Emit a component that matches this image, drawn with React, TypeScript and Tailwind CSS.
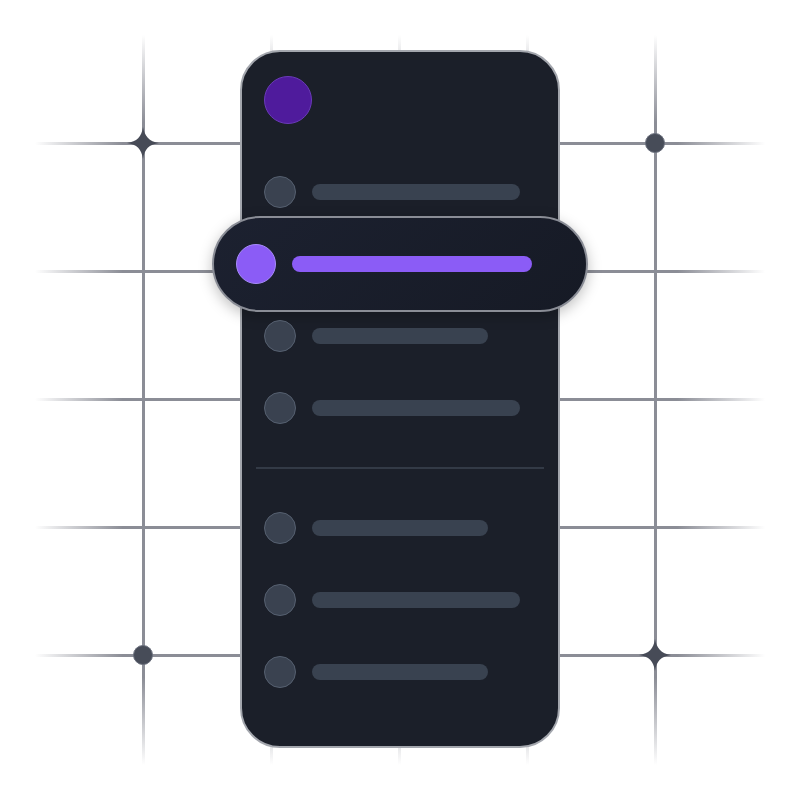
import React from "react";

const LINE_POS = [143, 271, 399, 527, 655];

function Sparkle({ className }: { className?: string }) {
  return (
    <svg viewBox="0 0 32 32" className={className}>
      <path
        d="M16 0 C17.5 9 22 14.5 32 16 C22 17.5 17.5 22 16 32 C14.5 22 10 17.5 0 16 C10 14.5 14.5 10 16 0Z"
        fill="#474b57"
      />
    </svg>
  );
}

function Row({ short }: { short?: boolean }) {
  return (
    <div className="flex h-8 items-center gap-4 pl-6">
      <div className="h-8 w-8 shrink-0 rounded-full border border-[#566070] bg-[#3a4250]" />
      <div
        className={
          short
            ? "h-4 w-[176px] rounded-full bg-[#394250]"
            : "h-4 w-[208px] rounded-full bg-[#394250]"
        }
      />
    </div>
  );
}

export default function App() {
  return (
    <div className="relative h-[800px] w-[800px] overflow-hidden bg-white">
      {/* backdrop grid — free canvas */}
      {LINE_POS.map((p) => (
        <div
          key={"h" + p}
          className="absolute left-[35px] h-[3px] w-[730px] bg-[linear-gradient(90deg,rgba(139,141,150,0)_0%,#8b8d96_12%,#8b8d96_88%,rgba(139,141,150,0)_100%)]"
          style={{ top: p - 1.5 }}
        />
      ))}
      {LINE_POS.map((p) => (
        <div
          key={"v" + p}
          className="absolute top-[35px] h-[730px] w-[3px] bg-[linear-gradient(180deg,rgba(139,141,150,0)_0%,#8b8d96_12%,#8b8d96_88%,rgba(139,141,150,0)_100%)]"
          style={{ left: p - 1.5 }}
        />
      ))}
      <Sparkle className="absolute left-[127px] top-[127px] h-8 w-8" />
      <Sparkle className="absolute left-[639px] top-[639px] h-8 w-8" />
      <div className="absolute left-[645px] top-[133px] h-5 w-5 rounded-full border border-[#6a6f7c] bg-[#474c58]" />
      <div className="absolute left-[133px] top-[645px] h-5 w-5 rounded-full border border-[#6a6f7c] bg-[#474c58]" />

      {/* phone panel */}
      <div className="relative z-10 mx-auto mt-[50px] flex h-[698px] w-[320px] flex-col rounded-[40px] border-2 border-[#a3a6ad] bg-[#1b1f29]">
        <div className="ml-[22px] mt-[24px] h-12 w-12 rounded-full border border-[#6a3ab8] bg-[#4f1b9c]" />

        <div className="mt-[52px] flex flex-col">
          <div className="-ml-[2px]">
            <Row />
          </div>

          <div className="-mx-[30px] my-2 flex h-24 items-center gap-4 rounded-full border-2 border-[#8a8d96] bg-[linear-gradient(135deg,#1c2130_0%,#161a25_100%)] pl-[22px] shadow-[0_4px_14px_rgba(0,0,0,0.25)]">
            <div className="h-10 w-10 shrink-0 rounded-full border border-[#a78bfa] bg-[#8b5cf6]" />
            <div className="h-4 w-[240px] rounded-full bg-[#8b5cf6]" />
          </div>

          <div className="-ml-[2px] flex flex-col gap-10">
            <Row short />
            <Row />
          </div>

          <div className="mx-[14px] mb-[43px] mt-[43px] h-[2px] bg-[#333a46]" />

          <div className="-ml-[2px] flex flex-col gap-10">
            <Row short />
            <Row />
            <Row short />
          </div>
        </div>
      </div>
    </div>
  );
}
